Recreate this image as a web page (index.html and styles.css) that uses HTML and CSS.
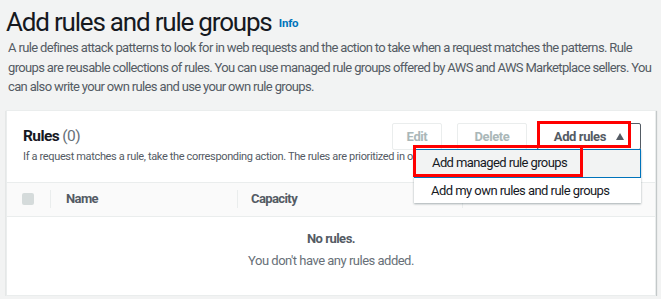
FILE: index.html
```html
<!DOCTYPE html>
<html>
<head>
    <title>Add rules and rule groups</title>
    <link rel="stylesheet" href="styles.css">
</head>
<body>
    <div class="page-head">
        <h1>Add rules and rule groups <a class="info" href="#">Info</a></h1>
        <p class="lead">A rule defines attack patterns to look for in web requests and the action to take when a request matches the patterns. Rule groups are reusable collections of rules. You can use managed rule groups offered by AWS and AWS Marketplace sellers. You can also write your own rules and use your own rule groups.</p>
    </div>

    <div class="card">
        <div class="card-header">
            <div class="card-title">
                <h2>Rules <span class="count">(0)</span></h2>
                <p class="card-desc">If a request matches a rule, take the corresponding action. The rules are prioritized in order they appear.</p>
            </div>
            <div class="actions">
                <button class="btn btn-edit" disabled>Edit</button>
                <button class="btn btn-delete" disabled>Delete</button>
                <div class="dropdown">
                    <button class="btn btn-open">Add rules<span class="caret"></span></button>
                    <div class="mark mark-btn"></div>
                    <ul class="menu">
                        <li class="menu-item active">Add managed rule groups</li>
                        <li class="menu-item">Add my own rules and rule groups</li>
                    </ul>
                    <div class="mark mark-item"></div>
                </div>
            </div>
        </div>

        <div class="table-head">
            <div class="col col-check"><span class="checkbox"></span></div>
            <div class="col col-name">Name</div>
            <div class="col col-cap">Capacity</div>
            <div class="col col-action">Action</div>
        </div>

        <div class="empty">
            <div class="empty-title">No rules.</div>
            <div class="empty-text">You don't have any rules added.</div>
        </div>
    </div>
</body>
</html>
```

FILE: styles.css
```css
body { margin: 0; padding: 0 5px 0 6px; background: #f2f3f3; font-family: Roboto, Arial, sans-serif; color: #16191f; letter-spacing: -0.5px; }
h1 { margin: 0; padding-top: 6px; font-size: 26px; font-weight: 400; line-height: 32px; letter-spacing: -1.2px; }
.info { font-size: 11.5px; line-height: 1; font-weight: 700; color: #0073bb; text-decoration: none; vertical-align: 4px; margin-left: 2px; letter-spacing: -0.2px; }
.lead { margin: 0 -4px 0 2px; font-size: 13px; line-height: 19.5px; color: #545b64; letter-spacing: -0.65px; }

.card { margin-top: 13px; background: #fff; border: 1px solid #eaeded; box-shadow: 0 1px 1px 0 rgba(0,28,36,0.3), 1px 1px 1px 0 rgba(0,28,36,0.15); }
.card-header { display: flex; justify-content: space-between; height: 72px; box-sizing: border-box; padding: 12px 14px 0 16px; border-bottom: 1px solid #eaeded; }
.card-title { min-width: 0; flex: 1; }
h2 { margin: 2px 0 0; font-size: 15.5px; font-weight: 700; line-height: 22px; letter-spacing: -0.6px; }
.count { font-weight: 400; color: #687078; }
.card-desc { margin: 3px 0 0; font-size: 11px; line-height: 14px; color: #545b64; white-space: nowrap; letter-spacing: -0.35px; }

.actions { display: flex; align-items: flex-start; }
.btn { height: 27px; padding: 0; background: #fff; border: 1px solid #aab7b8; border-radius: 2px; font-family: inherit; font-size: 13px; font-weight: 700; color: #545b64; letter-spacing: -0.4px; }
.btn[disabled] { border-color: #eaeded; color: #aab7b8; }
.btn-edit { width: 50px; }
.btn-delete { width: 70px; margin-left: 15px; }
.dropdown { position: relative; margin-left: 10px; }
.btn-open { width: 104px; text-align: right; padding: 0 16px 0 0; color: #545b64; border-color: #545b64; }
.caret { display: inline-block; margin-left: 10px; width: 0; height: 0; border-left: 4px solid transparent; border-right: 4px solid transparent; border-bottom: 7px solid #545b64; vertical-align: 1px; }

.menu { position: absolute; top: 26px; right: 0; width: 227px; margin: 0; padding: 0; list-style: none; background: #fff; box-shadow: 0 1px 2px 0 rgba(0,28,36,0.35); z-index: 2; }
.menu-item { height: 25px; padding: 0 17px; font-size: 13px; line-height: 25px; color: #16191f; white-space: nowrap; letter-spacing: -0.55px; }
.menu-item.active { height: 27px; background: #f2f3f3; border: 1px solid #0073bb; line-height: 25px; letter-spacing: -0.6px; }

.mark { position: absolute; border: 3px solid #ff0000; z-index: 3; }
.mark-btn { top: -2px; left: 0; width: 88px; height: 21px; }
.mark-item { top: 22px; left: -124px; width: 164px; height: 26px; }

.table-head { display: flex; align-items: center; height: 33px; background: #fafafa; border-bottom: 1px solid #eaeded; font-size: 13px; font-weight: 700; color: #545b64; letter-spacing: -0.6px; }
.col { box-sizing: border-box; padding: 0 13px; border-left: 1px solid #eaeded; height: 18px; line-height: 18px; }
.col-check { border-left: 0; width: 43px; padding-left: 15px; }
.checkbox { display: block; width: 12px; height: 12px; margin-top: 3px; background: #d5dbdb; border-radius: 2px; }
.col-name { width: 187px; padding-left: 15px; }
.col-cap { width: 225px; }
.col-action { flex: 1; padding-left: 17px; }

.empty { padding: 12px 0 24px; text-align: center; font-size: 13px; }
.empty-title { font-weight: 700; color: #545b64; line-height: 20px; }
.empty-text { margin-top: 2px; color: #687078; line-height: 20px; }
```
